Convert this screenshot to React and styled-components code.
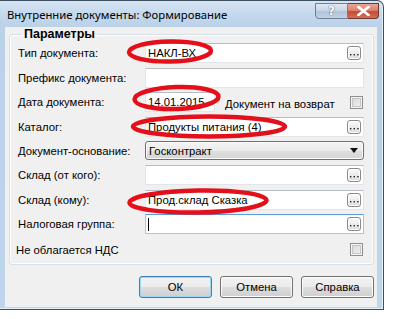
import React from "react";
import styled, { createGlobalStyle } from "styled-components";

const GlobalStyle = createGlobalStyle`
  body {
    margin: 0;
    background: #ffffff;
    font-family: "Liberation Sans", Arial, sans-serif;
  }
`;

function Dots() {
  return (
    <DotsButton>
      <svg width="9" height="3" viewBox="0 0 9 3">
        <rect x="0" y="1" width="1.4" height="1.4" fill="#222" />
        <rect x="3.6" y="1" width="1.4" height="1.4" fill="#222" />
        <rect x="7.2" y="1" width="1.4" height="1.4" fill="#222" />
      </svg>
    </DotsButton>
  );
}

function Field({ value, width, button, focused }) {
  return (
    <InputBox width={width} focused={focused}>
      <InputText>
        {value}
        {focused && <Caret />}
      </InputText>
      {button && <Dots />}
    </InputBox>
  );
}

function Marks() {
  return (
    <Annotations width="393" height="319" viewBox="0 0 393 319">
      <g fill="none" stroke="#e3101b" strokeWidth="4.5">
        <ellipse cx="170" cy="51.5" rx="41" ry="10" transform="rotate(-1 170 51.5)" />
        <ellipse cx="176.5" cy="98" rx="42" ry="11" transform="rotate(-2 176.5 98)" />
        <ellipse cx="209" cy="126.5" rx="76" ry="10" />
        <ellipse cx="198" cy="201.5" rx="68.5" ry="11" transform="rotate(-1 198 201.5)" />
      </g>
    </Annotations>
  );
}

export default function App() {
  return (
    <>
      <GlobalStyle />
      <Stage>
        <Window>
          <TitleBar>
            <Title>Внутренние документы: Формирование</Title>
            <Caption>
              <CaptionButton kind="help">?</CaptionButton>
              <CaptionButton kind="close">
                <svg width="13" height="10" viewBox="0 0 13 10">
                  <path d="M1.5 1 L11.5 9 M11.5 1 L1.5 9" stroke="#fff" strokeWidth="2.6" strokeLinecap="square" />
                </svg>
              </CaptionButton>
            </Caption>
          </TitleBar>
          <Client>
            <Group>
              <Legend>Параметры</Legend>
              <Rows>
                <Label>Тип документа:</Label>
                <Field value="НАКЛ-ВХ" button />

                <Label>Префикс документа:</Label>
                <Field value="" />

                <Label>Дата документа:</Label>
                <Inline>
                  <Field value="14.01.2015" width="70px" />
                  <SideLabel>Документ на возврат</SideLabel>
                  <Check />
                </Inline>

                <Label>Каталог:</Label>
                <Field value="Продукты питания (4)" button />

                <Label>Документ-основание:</Label>
                <Select>
                  <span>Госконтракт</span>
                  <svg width="8" height="5" viewBox="0 0 8 5">
                    <path d="M0 0 H8 L4 5 Z" fill="#111" />
                  </svg>
                </Select>

                <Label>Склад (от кого):</Label>
                <Field value="" button />

                <Label>Склад (кому):</Label>
                <Field value="Прод.склад Сказка" button />

                <Label>Налоговая группа:</Label>
                <Field value="" button focused />
              </Rows>
              <CheckRow>
                <span>Не облагается НДС</span>
                <Check />
              </CheckRow>
            </Group>
            <Buttons>
              <PushButton primary>ОК</PushButton>
              <PushButton>Отмена</PushButton>
              <PushButton>Справка</PushButton>
            </Buttons>
          </Client>
        </Window>
        <Marks />
      </Stage>
    </>
  );
}

const Stage = styled.div`
  position: relative;
  width: 393px;
  height: 319px;
  overflow: hidden;
  background: #ffffff;
`;

const Annotations = styled.svg`
  position: absolute;
  left: 0;
  top: 0;
  pointer-events: none;
`;

const Window = styled.div`
  box-sizing: border-box;
  width: 384px;
  height: 310px;
  display: flex;
  flex-direction: column;
  border: 1px solid #3b4f60;
  border-left: none;
  border-radius: 0 7px 0 0;
  background: linear-gradient(180deg, #d6e4f3 0px, #c4d8ec 14px, #bad1e8 26px, #bfd5eb 100%);
  box-shadow: inset -1px 0 0 #e6f0fa, inset 0 -1px 0 #e6f0fa;
`;

const TitleBar = styled.div`
  height: 25px;
  display: flex;
  align-items: center;
  justify-content: space-between;
  padding: 0 4px 0 7px;
`;

const Title = styled.div`
  font-family: "Noto Sans", "Open Sans", sans-serif;
  font-size: 11.3px;
  color: #000;
  margin-top: 2px;
`;

const Caption = styled.div`
  display: flex;
  align-self: flex-start;
  margin-top: 2px;
`;

const CaptionButton = styled.div`
  box-sizing: border-box;
  width: ${(p) => (p.kind === "close" ? "31px" : "33px")};
  height: 16px;
  display: flex;
  align-items: center;
  justify-content: center;
  border: 1px solid ${(p) => (p.kind === "close" ? "#6d3a32" : "#6e8094")};
  border-radius: ${(p) => (p.kind === "close" ? "0 0 4px 0" : "0 0 0 4px")};
  border-left: ${(p) => (p.kind === "close" ? "none" : "")};
  font-family: "DejaVu Sans", sans-serif;
  font-size: 12px;
  font-weight: bold;
  color: #fff;
  text-shadow: 0 0 1px #4d5f73, 0 0 1px #4d5f73;
  background: ${(p) =>
    p.kind === "close"
      ? "linear-gradient(180deg, #e8a696 0%, #d98572 45%, #c44b33 55%, #d2705a 100%)"
      : "linear-gradient(180deg, #dfe8f2 0%, #c9d7e6 45%, #b0c3d8 55%, #c3d3e4 100%)"};
`;

const Client = styled.div`
  flex: 1;
  margin: 1px 6px 2px 5px;
  background: #f0f0f0;
  display: flex;
  flex-direction: column;
`;

const Group = styled.fieldset`
  margin: 0 3px 0 4px;
  padding: 2px 9px 8px 8px;
  border: 1px solid #d5dfe5;
  border-radius: 3px;
  box-shadow: inset 0 0 0 1px #ffffff;
`;

const Legend = styled.legend`
  padding: 0 2px;
  margin-left: 4px;
  font-size: 12.5px;
  font-weight: bold;
  color: #000;
  line-height: 14px;
`;

const Rows = styled.div`
  display: grid;
  grid-template-columns: 127px 219px;
  row-gap: 4.6px;
  align-items: center;
`;

const Label = styled.div`
  font-size: 11.3px;
  color: #000;
  white-space: nowrap;
`;

const InputBox = styled.div`
  box-sizing: border-box;
  width: ${(p) => p.width || "100%"};
  height: 20px;
  display: flex;
  align-items: center;
  background: #fff;
  border: 1px solid ${(p) => (p.focused ? "#a8c8e8" : "#e2e5ea")};
  border-top-color: ${(p) => (p.focused ? "#5d9ad8" : "#b8bdc4")};
  padding-right: 2px;
`;

const InputText = styled.div`
  flex: 1;
  display: flex;
  align-items: center;
  padding-left: 2px;
  font-size: 11.3px;
  color: #000;
  white-space: nowrap;
`;

const Caret = styled.span`
  display: inline-block;
  width: 1px;
  height: 13px;
  background: #000;
`;

const DotsButton = styled.div`
  box-sizing: border-box;
  width: 14px;
  height: 14px;
  display: flex;
  align-items: flex-end;
  justify-content: center;
  padding-bottom: 3px;
  border: 1px solid #8a8a8a;
  border-radius: 3px;
  background: linear-gradient(180deg, #fafafa 0%, #ececec 50%, #dcdcdc 100%);
  box-shadow: inset 0 0 0 1px #fff;
`;

const Inline = styled.div`
  display: flex;
  align-items: center;
`;

const SideLabel = styled.span`
  font-size: 11.3px;
  margin-left: 10px;
  margin-top: 4px;
`;

const Check = styled.div`
  box-sizing: border-box;
  width: 13px;
  height: 13px;
  margin-left: auto;
  margin-right: 1px;
  border: 1px solid #8f8f8f;
  background: linear-gradient(135deg, #d6d6d6 0%, #f2f2f2 100%);
  box-shadow: inset 0 0 0 1px #f4f4f4, inset 0 0 0 2px #c4c4c4;
`;

const Select = styled.div`
  box-sizing: border-box;
  height: 19px;
  display: flex;
  align-items: center;
  justify-content: space-between;
  padding: 0 5px 0 3px;
  border: 1px solid #707070;
  border-radius: 3px;
  background: linear-gradient(180deg, #f4f4f4 0%, #ebebeb 50%, #dedede 51%, #d6d6d6 100%);
  box-shadow: inset 0 0 0 1px #fbfbfb;
  font-size: 11.3px;
  color: #000;
`;

const CheckRow = styled.div`
  display: flex;
  align-items: center;
  justify-content: space-between;
  margin: 9px 0 0 -2px;
  font-size: 11.3px;
  color: #000;
`;

const Buttons = styled.div`
  display: flex;
  justify-content: flex-end;
  gap: 8px;
  margin: 11px 3px 0 0;
`;

const PushButton = styled.div`
  box-sizing: border-box;
  width: 73px;
  height: 22px;
  display: flex;
  align-items: center;
  justify-content: center;
  font-size: 11.3px;
  color: #000;
  border: 1px solid ${(p) => (p.primary ? "#3c7fb1" : "#707070")};
  border-radius: 3px;
  background: linear-gradient(180deg, #f2f2f2 0%, #ebebeb 50%, #dddddd 51%, #cfcfcf 100%);
  box-shadow: inset 0 0 0 1px ${(p) => (p.primary ? "#9fd8f5" : "#fcfcfc")};
`;
